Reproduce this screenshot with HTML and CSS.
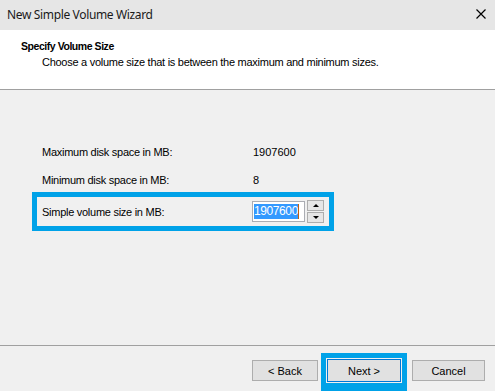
FILE: index.html
```html
<!DOCTYPE html>
<html lang="en">
<head>
    <meta charset="UTF-8">
    <meta name="viewport" content="width=device-width, initial-scale=1.0">
    <title>New Simple Volume Wizard</title>
    <link rel="stylesheet" href="styles.css">
</head>
<body>
    <div class="window">
        <div class="titlebar">
            <span class="title">New Simple Volume Wizard</span>
            <svg class="close" width="10" height="10" viewBox="0 0 10 10">
                <path d="M0.5 0.5 L9.5 9.5 M9.5 0.5 L0.5 9.5" stroke="#000" stroke-width="1.2"/>
            </svg>
        </div>

        <div class="header">
            <h2>Specify Volume Size</h2>
            <p>Choose a volume size that is between the maximum and minimum sizes.</p>
        </div>

        <div class="content">
            <div class="row">
                <span class="label">Maximum disk space in MB:</span>
                <span class="value">1907600</span>
            </div>
            <div class="row">
                <span class="label">Minimum disk space in MB:</span>
                <span class="value">8</span>
            </div>
            <div class="row highlight">
                <span class="label">Simple volume size in MB:</span>
                <div class="spinner">
                    <div class="spin-input"><span class="selected">1907600</span><span class="caret"></span></div>
                    <div class="spin-buttons">
                        <div class="spin-btn"><span class="up"></span></div>
                        <div class="spin-btn"><span class="down"></span></div>
                    </div>
                </div>
            </div>
        </div>

        <div class="footer">
            <button class="button back">&lt; Back</button>
            <div class="next-mark">
                <button class="button next">Next &gt;</button>
            </div>
            <button class="button cancel">Cancel</button>
        </div>
    </div>
</body>
</html>
```

FILE: styles.css
```css
body {
    margin: 0;
    font-family: "Liberation Sans", Arial, sans-serif;
    font-size: 11px;
    letter-spacing: -0.27px;
    color: #000;
    overflow: hidden;
}

.window {
    width: 495px;
    height: 391px;
    display: flex;
    flex-direction: column;
    background-color: #f0f0f0;
    overflow: hidden;
}

/* Title bar */
.titlebar {
    height: 30px;
    flex: none;
    display: flex;
    align-items: center;
    justify-content: space-between;
    padding: 0 9px 0 7px;
    background-color: #e6e6e6;
}
.title {
    font-family: "Noto Sans", "Open Sans", sans-serif;
    font-size: 12px;
    color: #1a1a1a;
    position: relative;
    top: -1px;
    letter-spacing: -0.35px;
}
.close {
    display: block;
    margin-top: -3px;
}

/* Header */
.header {
    flex: none;
    background-color: #fff;
    border-bottom: 1px solid #a0a0a0;
    box-sizing: border-box;
    height: 60px;
    padding: 9px 0 0 21px;
}
.header h2 {
    margin: 0;
    font-size: 10.5px;
    font-weight: bold;
    letter-spacing: -0.45px;
    line-height: 14px;
}
.header p {
    margin: 2px 0 0 21px;
    line-height: 14px;
}

/* Body */
.content {
    flex: 1;
    padding: 55px 0 0 32px;
}
.row {
    display: flex;
    align-items: center;
    width: 302px;
    box-sizing: border-box;
    height: 14px;
    line-height: 14px;
    padding-left: 10px;
    margin-bottom: 14px;
}
.label {
    width: 211px;
    flex: none;
}
.value {
    letter-spacing: 0;
}
.row.highlight {
    margin-top: -9px;
    height: 39px;
    border: 5px solid #00a2e8;
    padding-left: 5px;
}
.spinner {
    display: flex;
    align-items: center;
    gap: 2px;
    margin-left: -1px;
}
.spin-input {
    width: 50px;
    height: 19px;
    border: 1px solid #abadb3;
    background: #fff;
    display: flex;
    align-items: center;
    padding-left: 1px;
}
.selected {
    background-color: #3399ff;
    color: #fff;
    font-size: 12px;
    line-height: 15px;
    letter-spacing: -0.4px;
}
.caret {
    width: 1px;
    height: 15px;
    background: #c06010;
}
.spin-buttons {
    display: flex;
    flex-direction: column;
    gap: 1px;
}
.spin-btn {
    width: 15px;
    height: 9px;
    border: 1px solid #adadad;
    background-color: #e6e6e6;
    display: flex;
    align-items: center;
    justify-content: center;
}
.up {
    border-left: 3px solid transparent;
    border-right: 3px solid transparent;
    border-bottom: 3px solid #000;
}
.down {
    border-left: 3px solid transparent;
    border-right: 3px solid transparent;
    border-top: 3px solid #000;
}

/* Footer */
.footer {
    height: 46px;
    flex: none;
    box-sizing: border-box;
    border-top: 1px solid #a0a0a0;
    display: flex;
    align-items: flex-start;
    justify-content: flex-end;
    padding: 14px 10px 0 0;
}
.button {
    font-family: "Liberation Sans", Arial, sans-serif;
    font-size: 11px;
    color: #000;
    height: 21px;
    background-color: #e1e1e1;
    border: 1px solid #adadad;
    padding: 0;
    margin: 0;
}
.back {
    width: 66px;
    margin-right: 3px;
}
.cancel {
    width: 73px;
    margin-left: 5px;
}
.next-mark {
    margin-top: -7px;
    border: 5px solid #00a2e8;
    border-bottom-width: 10px;
    padding: 1px;
    display: flex;
}
.next {
    width: 74px;
    height: 23px;
    border-color: #0078d7;
}
```
